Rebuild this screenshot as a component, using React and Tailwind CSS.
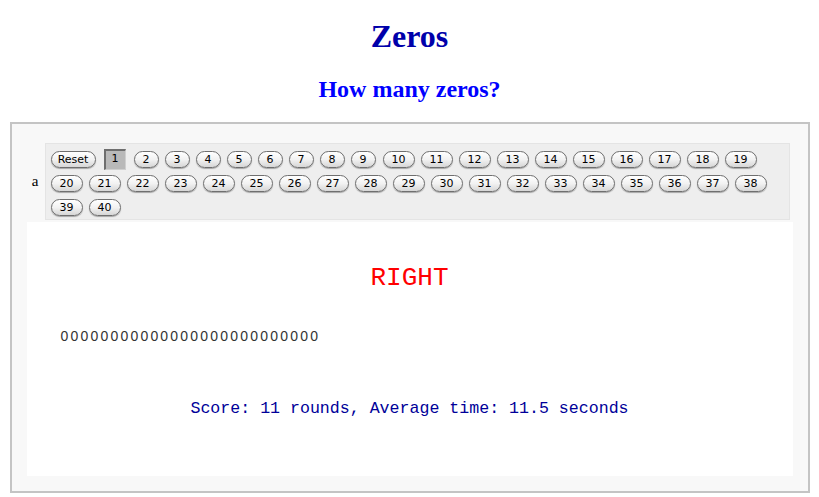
import React from "react";

function Btn({ label, w, extra = "" }) {
  return (
    <div className={`h-[24px] flex items-center ${extra}`}>
      <div
        className={`h-[17px] ${w} rounded-full border border-[#6f6f6f] bg-linear-to-b from-white via-[#f2f2f2] to-[#d6d6d6] shadow-[0_1px_1px_rgba(0,0,0,0.3)] flex items-center justify-center text-[11px] text-black leading-none`}
        style={{ fontFamily: '"DejaVu Sans", "Liberation Sans", sans-serif' }}
      >
        {label}
      </div>
    </div>
  );
}

export default function App() {
  const nums = [];
  for (let i = 2; i <= 40; i++) nums.push(i);
  return (
    <div className="bg-white w-[819px] h-[497px] overflow-hidden" style={{ fontFamily: '"Liberation Serif", serif' }}>
      <h1 className="text-center text-[32px] font-bold text-[#0000aa] leading-[36px] pt-[18px]">Zeros</h1>
      <h2 className="text-center text-[24px] font-bold text-[#0000ff] leading-[28px] mt-[21px]">How many zeros?</h2>
      <div className="mx-auto mt-[19px] w-[800px] h-[371px] border-2 border-[#c4c4c4] bg-[#f8f8f8] pt-[19px] px-[15px] pb-[15px]">
        <div className="flex">
          <div className="w-[18px] flex items-center justify-center text-[15px] text-black pr-[1px]">a</div>
          <div className="w-[745px] h-[77px] border border-[#e4e4e4] bg-[#eeeeee] pt-[3px] pl-[5px] pr-[5px]">
            <div className="flex flex-wrap gap-x-[6px]">
              <Btn label="Reset" w="w-[45px]" />
              <div className="h-[24px] flex items-center mx-[2px]">
                <div
                  className="w-[22px] h-[21px] bg-[#b9b9b9] border-t-2 border-l-2 border-r border-b border-t-[#6e6e6e] border-l-[#6e6e6e] border-r-[#cfcfcf] border-b-[#cfcfcf] flex items-center justify-center text-[11px] text-black"
                  style={{ fontFamily: '"DejaVu Sans", "Liberation Sans", sans-serif' }}
                >
                  1
                </div>
              </div>
              {nums.map((n) => (
                <Btn key={n} label={String(n)} w={n < 10 ? "w-[25px]" : "w-[32px]"} extra={n === 10 ? "ml-[1px]" : ""} />
              ))}
            </div>
          </div>
        </div>
        <div className="mt-[2px] h-[254px] bg-white flex flex-col">
          <div
            className="mt-[41px] text-center text-[26px] leading-[30px] text-[#ff0000]"
            style={{ fontFamily: '"Liberation Mono", monospace' }}
          >
            RIGHT
          </div>
          <div
            className="mt-[35px] pl-[34px] text-[14px] leading-[16px] tracking-[2.2px] text-[#333]"
            style={{ fontFamily: '"Liberation Sans", sans-serif' }}
          >
            00000000000000000000000000
          </div>
          <div
            className="mt-[55px] text-center text-[16.6px] leading-[19px] text-[#000099]"
            style={{ fontFamily: '"Liberation Mono", monospace' }}
          >
            Score: 11 rounds, Average time: 11.5 seconds
          </div>
        </div>
      </div>
    </div>
  );
}
